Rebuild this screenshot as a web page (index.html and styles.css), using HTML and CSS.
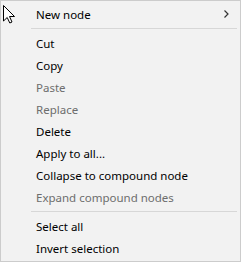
FILE: index.html
```html
<!DOCTYPE html>
<html>
<head>
<meta charset="utf-8">
<link rel="stylesheet" href="styles.css">
</head>
<body>
<div class="menu">
  <div class="item"><span class="label">New node</span><svg class="chev" width="5" height="8" viewBox="0 0 5 8"><polyline points="0.5,0.5 4,4 0.5,7.5" fill="none" stroke="#333" stroke-width="1.2"/></svg></div>
  <div class="sep"></div>
  <div class="item"><span class="label">Cut</span></div>
  <div class="item"><span class="label">Copy</span></div>
  <div class="item disabled"><span class="label">Paste</span></div>
  <div class="item disabled"><span class="label">Replace</span></div>
  <div class="item"><span class="label">Delete</span></div>
  <div class="item"><span class="label">Apply to all...</span></div>
  <div class="item"><span class="label">Collapse to compound node</span></div>
  <div class="item disabled"><span class="label">Expand compound nodes</span></div>
  <div class="sep"></div>
  <div class="item"><span class="label">Select all</span></div>
  <div class="item"><span class="label">Invert selection</span></div>
  <svg class="cursor" width="14" height="20" viewBox="0 0 14 20"><polygon points="0.5,0.5 0.5,16 4.2,12.5 6.8,18 9,17 6.5,11.5 11.5,11.5" fill="#fff" stroke="#000" stroke-width="1" stroke-linejoin="miter"/></svg>
</div>
</body>
</html>
```
FILE: styles.css
```css
html, body {
  margin: 0;
  padding: 0;
  background: #f2f2f2;
}
.menu {
  position: relative;
  width: 241px;
  height: 262px;
  box-sizing: border-box;
  border: 1px solid #cccccc;
  background: #f2f2f2;
  padding: 2px 2px;
  display: flex;
  flex-direction: column;
  font-family: "Noto Sans", "Open Sans", sans-serif;
  font-size: 11.5px;
  color: #000;
}
.item {
  height: 22px;
  display: flex;
  align-items: center;
  padding-left: 33px;
  padding-right: 9px;
  flex-shrink: 0;
}
.label {
  flex: 1;
  white-space: nowrap;
}
.disabled {
  color: #6d6d6d;
}
.chev {
  display: block;
}
.sep {
  height: 7px;
  flex-shrink: 0;
  position: relative;
}
.sep::after {
  content: "";
  position: absolute;
  left: 28px;
  right: 1px;
  top: 3px;
  height: 1px;
  background: #d7d7d7;
}
.cursor {
  position: absolute;
  left: 2px;
  top: 4px;
}
```
